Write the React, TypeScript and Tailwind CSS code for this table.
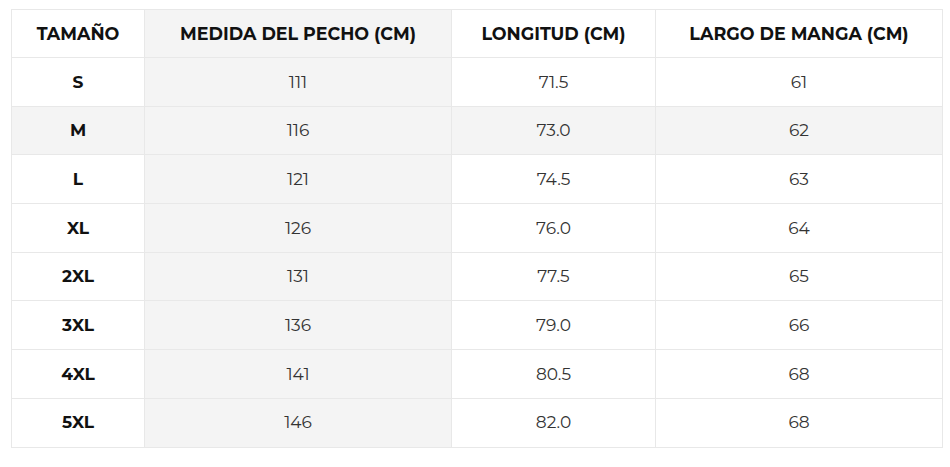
const rows = [
  ["S", "111", "71.5", "61"],
  ["M", "116", "73.0", "62"],
  ["L", "121", "74.5", "63"],
  ["XL", "126", "76.0", "64"],
  ["2XL", "131", "77.5", "65"],
  ["3XL", "136", "79.0", "66"],
  ["4XL", "141", "80.5", "68"],
  ["5XL", "146", "82.0", "68"],
];

const headers = ["TAMAÑO", "MEDIDA DEL PECHO (CM)", "LONGITUD (CM)", "LARGO DE MANGA (CM)"];

export default function App() {
  return (
    <div className="min-h-screen bg-white pl-[11px] pt-[9px] font-['Montserrat','Open_Sans',sans-serif] text-[#222]">
      <table className="w-[931px] table-fixed border-collapse border border-[#e8e8e8]">
        <colgroup>
          <col className="w-[133px]" />
          <col className="w-[307px]" />
          <col className="w-[204px]" />
          <col className="w-[287px]" />
        </colgroup>
        <thead>
          <tr className="h-[48px]">
            {headers.map((h, i) => (
              <th
                key={h}
                className={`border border-[#e8e8e8] pt-[2px] text-center text-[17.5px] font-bold text-[#111] ${
                  i === 1 ? "bg-[#f4f4f4]" : "bg-white"
                }`}
              >
                {h}
              </th>
            ))}
          </tr>
        </thead>
        <tbody>
          {rows.map((row) => (
            <tr key={row[0]} className={`h-[48.7px] ${row[0] === "M" ? "bg-[#f4f4f4]" : ""}`}>
              {row.map((cell, i) => (
                <td
                  key={i}
                  className={`border border-[#e8e8e8] pt-[1px] text-center text-[17px] ${
                    i === 0 ? "font-bold text-[#111]" : "font-normal text-[#333]"
                  } ${i === 1 ? "bg-[#f4f4f4]" : ""}`}
                >
                  {cell}
                </td>
              ))}
            </tr>
          ))}
        </tbody>
      </table>
    </div>
  );
}
